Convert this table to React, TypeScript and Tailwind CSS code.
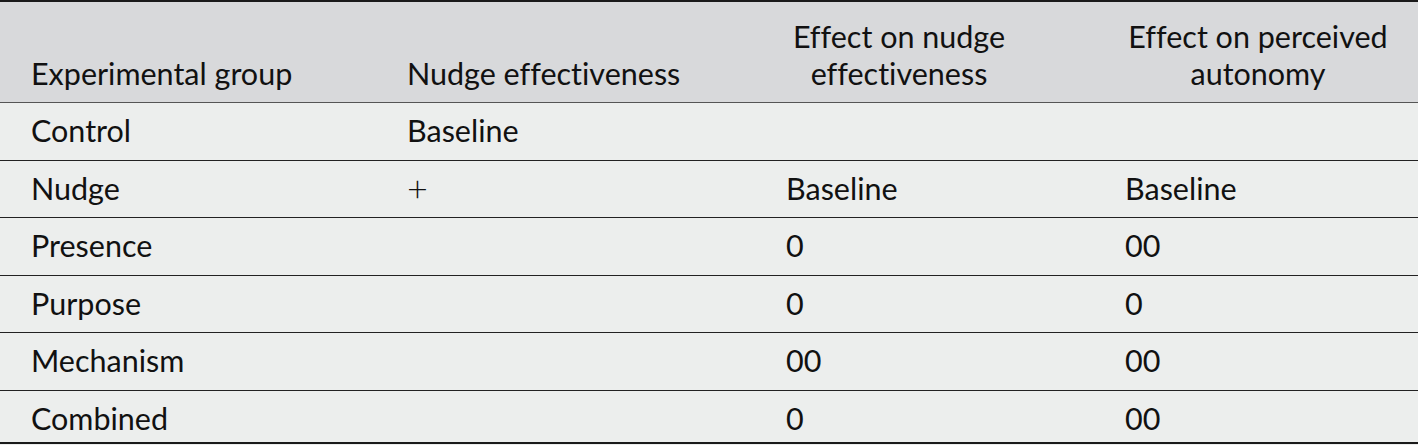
const rows: { group: string; eff: string; nudge: string; auto: string }[] = [
  { group: "Control", eff: "Baseline", nudge: "", auto: "" },
  { group: "Nudge", eff: "+", nudge: "Baseline", auto: "Baseline" },
  { group: "Presence", eff: "", nudge: "0", auto: "00" },
  { group: "Purpose", eff: "", nudge: "0", auto: "0" },
  { group: "Mechanism", eff: "", nudge: "00", auto: "00" },
  { group: "Combined", eff: "", nudge: "0", auto: "00" },
];

export default function App() {
  return (
    <div className="h-[445px] w-[1418px] overflow-hidden bg-[#eceeed] font-['Lato',sans-serif] text-[30.5px] leading-[36px] text-[#111] [font-variant-ligatures:no-common-ligatures]">
      <div className="border-t-2 border-[#1a1a1a]">
        {/* header */}
        <div className="grid h-[101px] grid-cols-[387px_379px_339px_313px] items-end border-b border-[#555] bg-[#d8d9db] pb-[10px] leading-[37px]">
          <div className="pl-[31px]">Experimental group</div>
          <div className="pl-[20px]">Nudge effectiveness</div>
          <div className="pl-[20px] pr-[93px] text-center">
            Effect on nudge
            <br />
            effectiveness
          </div>
          <div className="pl-[20px] pr-[27px] text-center">
            Effect on perceived
            <br />
            autonomy
          </div>
        </div>

        {rows.map((r, i) => (
          <div
            key={r.group}
            className={
              i === rows.length - 1
                ? "grid h-[53.5px] grid-cols-[387px_379px_339px_313px] border-b-2 border-[#1a1a1a] pt-[9px]"
                : "grid h-[57.5px] grid-cols-[387px_379px_339px_313px] border-b border-[#222] pt-[9px]"
            }
          >
            <div className="pl-[31px]">{r.group}</div>
            <div className="pl-[20px]">
              {r.eff === "+" ? <span className="text-[36px] font-light">+</span> : r.eff}
            </div>
            <div className="pl-[20px]">{r.nudge}</div>
            <div className="pl-[20px]">{r.auto}</div>
          </div>
        ))}
      </div>
    </div>
  );
}
